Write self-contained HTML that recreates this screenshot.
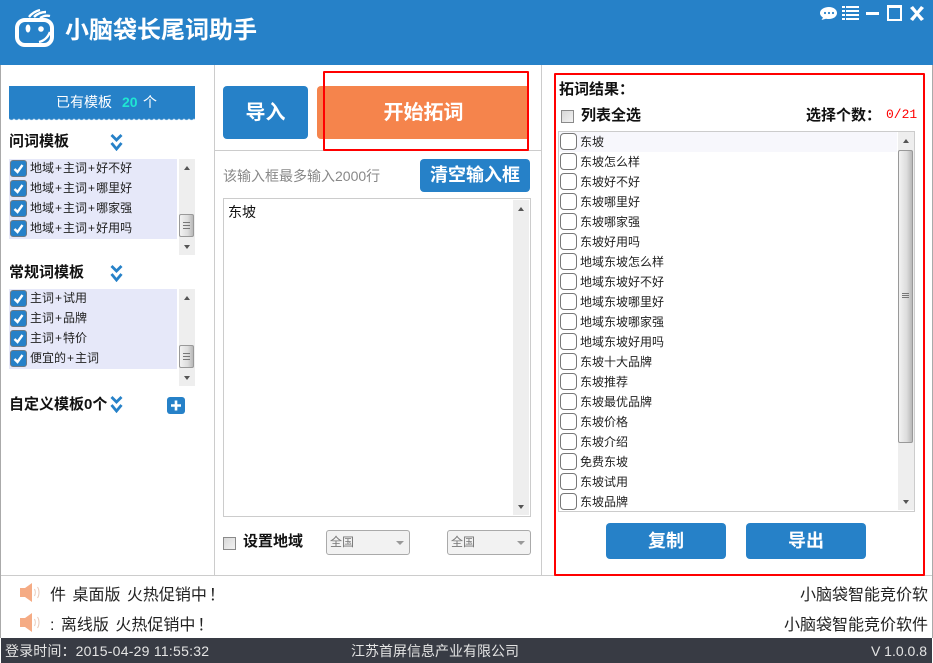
<!DOCTYPE html>
<html lang="zh"><head><meta charset="utf-8"><title>小脑袋长尾词助手</title>
<style>
html,body{margin:0;padding:0;background:#fff}
#app{position:relative;width:933px;height:663px;overflow:hidden;background:#fff;font-family:"Liberation Sans","Noto Sans CJK SC",sans-serif;color:#222;font-size:12px}
#app div,#app svg{position:absolute}
.t{white-space:nowrap;line-height:20px}
.b14{font-size:15px;font-weight:bold;color:#111}
.p{font-family:"Noto Sans CJK TC",sans-serif}
.m{margin:0 1px}
.btn{background:#2681c8;color:#fff;border-radius:4px;text-align:center;font-weight:bold;white-space:nowrap}
.ck{width:15px;height:15px;border:1px solid #6d7a85;border-radius:3px;background:#2681c8}
.ck svg{left:2px;top:2px}
.un{width:15px;height:15px;border:1px solid #777;border-radius:4px;background:#fff}
.it{left:580px;font-size:12px;color:#222;line-height:20px;white-space:nowrap}
.lt{left:30px;font-size:12px;color:#222;line-height:20px;white-space:nowrap}
.sb{background:#eee}
.up{width:0;height:0;border-left:3px solid transparent;border-right:3px solid transparent;border-bottom:4px solid #555}
.dn{width:0;height:0;border-left:3px solid transparent;border-right:3px solid transparent;border-top:4px solid #555}
.thumb{background:linear-gradient(90deg,#f2f2f2,#dcdcdc 60%,#b8b8b8);border:1px solid #999;border-radius:2px;box-sizing:border-box}
.gr{width:7px;height:1px;background:#777}
.sq{width:11px;height:11px;border:1px solid #8a8a8a;background:linear-gradient(135deg,#d8d8d8,#f2f2f2)}
.sel{width:82px;height:23px;border:1px solid #aaa;border-radius:3px;background:#f2f2f2;color:#777;line-height:23px;text-indent:3px;font-size:12px}
.sel i{position:absolute;right:5px;top:10px;width:0;height:0;border-left:4px solid transparent;border-right:4px solid transparent;border-top:4px solid #999}
.mq{font-size:16px;color:#222;word-spacing:2px}
</style></head><body>
<div id="app">
<!-- header -->
<div style="left:0;top:0;width:933px;height:65px;background:#2681c8"></div>
<svg style="left:12px;top:8px" width="46" height="42" viewBox="0 0 46 42" fill="none">
<rect x="5" y="12" width="35" height="25" rx="8" stroke="#fff" stroke-width="4"/>
<path d="M17 9C20 5 24 3 28 2M22 9C25 6 29 4 34 4M28 10C31 8 34 7 38 8" stroke="#fff" stroke-width="2.400"/>
<ellipse cx="16" cy="20.500" rx="2.400" ry="4" fill="#fff"/><circle cx="29" cy="21" r="2.800" fill="#fff"/>
<path d="M27 34C32 33 36 29 38 24" stroke="#fff" stroke-width="2.400"/>
</svg>
<div class="t" style="left:65px;top:15px;font-size:24px;font-weight:bold;color:#fff;line-height:32px">小脑袋长尾词助手</div>
<svg style="left:820px;top:5px" width="106" height="17" viewBox="0 0 106 17" fill="#fff">
<path d="M9 2C13.500 2 17 4.500 17 8S13.500 14 9 14C8 14 7 14 6 13.700L1.500 15L3 12.500C1.300 11.500 0 10 0 8C0 4.500 4 2 9 2Z"/>
<circle cx="5" cy="8" r="1.100" fill="#2681c8"/><circle cx="9" cy="8" r="1.100" fill="#2681c8"/><circle cx="13" cy="8" r="1.100" fill="#2681c8"/>
<rect x="22" y="1" width="3" height="2"/><rect x="26" y="1" width="13" height="2"/>
<rect x="22" y="5" width="3" height="2"/><rect x="26" y="5" width="13" height="2"/>
<rect x="22" y="9" width="3" height="2"/><rect x="26" y="9" width="13" height="2"/>
<rect x="22" y="13" width="3" height="2"/><rect x="26" y="13" width="13" height="2"/>
<rect x="46" y="7" width="13" height="3"/>
<path d="M67 0H82V16H67ZM69 3V14H80V3Z" fill-rule="evenodd"/>
<path d="M90 3L93 1L97 6L101 1L104 3L99 8.500L104 14L101 16L97 11L93 16L90 14L95 8.500Z"/>
</svg>
<!-- frame -->
<div style="left:0;top:65px;width:1px;height:573px;background:#aaa"></div>
<div style="left:932px;top:65px;width:1px;height:573px;background:#aaa"></div>
<div style="left:214px;top:65px;width:1px;height:510px;background:#ccc"></div>
<div style="left:541px;top:65px;width:1px;height:510px;background:#ccc"></div>
<div style="left:215px;top:150px;width:326px;height:1px;background:#ccc"></div>
<div style="left:1px;top:575px;width:931px;height:1px;background:#ccc"></div>
<!-- left panel -->
<div style="left:9px;top:86px;width:186px;height:32px;background:#2681c8"></div>
<div style="left:9px;top:117px;width:186px;height:5px;background:radial-gradient(circle at 2.500px 0,#2681c8 2.500px,#bcd8ee 3px,#fff 3.500px) 0 0/5px 5px repeat-x"></div>
<div class="t" style="left:56px;top:92px;font-size:14px;color:#fff">已有模板</div>
<div class="t" style="left:122px;top:92px;font-size:14px;font-weight:bold;color:#1fe6d2">20</div>
<div class="t" style="left:143px;top:92px;font-size:14px;color:#fff">个</div>

<div class="t b14" style="left:9px;top:132px">问词模板</div>
<svg style="left:110px;top:134px" width="13" height="17" viewBox="0 0 13 17" fill="none" stroke="#2681c8" stroke-width="2.800"><path d="M1.500 1L6.500 6L11.500 1M1.500 9L6.500 15L11.500 9"/></svg>
<div style="left:9px;top:159px;width:168px;height:80px;background:#e6e8f9"></div>
<div class="ck" style="left:10px;top:160px"><svg width="11" height="11" viewBox="0 0 11 11" fill="none" stroke="#fff" stroke-width="2.400"><path d="M1.500 6L4.500 9L9.500 2"/></svg></div>
<div class="ck" style="left:10px;top:180px"><svg width="11" height="11" viewBox="0 0 11 11" fill="none" stroke="#fff" stroke-width="2.400"><path d="M1.500 6L4.500 9L9.500 2"/></svg></div>
<div class="ck" style="left:10px;top:200px"><svg width="11" height="11" viewBox="0 0 11 11" fill="none" stroke="#fff" stroke-width="2.400"><path d="M1.500 6L4.500 9L9.500 2"/></svg></div>
<div class="ck" style="left:10px;top:220px"><svg width="11" height="11" viewBox="0 0 11 11" fill="none" stroke="#fff" stroke-width="2.400"><path d="M1.500 6L4.500 9L9.500 2"/></svg></div>
<div class="lt" style="top:158px">地域<span class="m">+</span>主词<span class="m">+</span>好不好</div>
<div class="lt" style="top:178px">地域<span class="m">+</span>主词<span class="m">+</span>哪里好</div>
<div class="lt" style="top:198px">地域<span class="m">+</span>主词<span class="m">+</span>哪家强</div>
<div class="lt" style="top:218px">地域<span class="m">+</span>主词<span class="m">+</span>好用吗</div>
<div class="sb" style="left:179px;top:159px;width:16px;height:96px"></div>
<div class="up" style="left:184px;top:166px"></div><div class="dn" style="left:184px;top:245px"></div>
<div class="thumb" style="left:179px;top:214px;width:15px;height:23px"></div>
<div class="gr" style="left:183px;top:222px"></div><div class="gr" style="left:183px;top:225px"></div><div class="gr" style="left:183px;top:228px"></div>

<div class="t b14" style="left:9px;top:132px;display:none"></div>
<div class="t b14" style="left:9px;top:263px">常规词模板</div>
<svg style="left:110px;top:265px" width="13" height="17" viewBox="0 0 13 17" fill="none" stroke="#2681c8" stroke-width="2.800"><path d="M1.500 1L6.500 6L11.500 1M1.500 9L6.500 15L11.500 9"/></svg>
<div style="left:9px;top:289px;width:168px;height:80px;background:#e6e8f9"></div>
<div class="ck" style="left:10px;top:290px"><svg width="11" height="11" viewBox="0 0 11 11" fill="none" stroke="#fff" stroke-width="2.400"><path d="M1.500 6L4.500 9L9.500 2"/></svg></div>
<div class="ck" style="left:10px;top:310px"><svg width="11" height="11" viewBox="0 0 11 11" fill="none" stroke="#fff" stroke-width="2.400"><path d="M1.500 6L4.500 9L9.500 2"/></svg></div>
<div class="ck" style="left:10px;top:330px"><svg width="11" height="11" viewBox="0 0 11 11" fill="none" stroke="#fff" stroke-width="2.400"><path d="M1.500 6L4.500 9L9.500 2"/></svg></div>
<div class="ck" style="left:10px;top:350px"><svg width="11" height="11" viewBox="0 0 11 11" fill="none" stroke="#fff" stroke-width="2.400"><path d="M1.500 6L4.500 9L9.500 2"/></svg></div>
<div class="lt" style="top:288px">主词<span class="m">+</span>试用</div>
<div class="lt" style="top:308px">主词<span class="m">+</span>品牌</div>
<div class="lt" style="top:328px">主词<span class="m">+</span>特价</div>
<div class="lt" style="top:348px">便宜的<span class="m">+</span>主词</div>
<div class="sb" style="left:179px;top:289px;width:16px;height:97px"></div>
<div class="up" style="left:184px;top:296px"></div><div class="dn" style="left:184px;top:376px"></div>
<div class="thumb" style="left:179px;top:345px;width:15px;height:23px"></div>
<div class="gr" style="left:183px;top:353px"></div><div class="gr" style="left:183px;top:356px"></div><div class="gr" style="left:183px;top:359px"></div>

<div class="t b14" style="left:9px;top:395px">自定义模板0个</div>
<svg style="left:110px;top:396px" width="13" height="17" viewBox="0 0 13 17" fill="none" stroke="#2681c8" stroke-width="2.800"><path d="M1.500 1L6.500 6L11.500 1M1.500 9L6.500 15L11.500 9"/></svg>
<svg style="left:167px;top:397px" width="18" height="17" viewBox="0 0 18 17"><rect width="18" height="17" rx="3" fill="#2681c8"/><path d="M4 8.500H14M9 3.500V13.500" stroke="#fff" stroke-width="2.600"/></svg>

<!-- middle -->
<div class="btn" style="left:223px;top:86px;width:85px;height:53px;line-height:55px;font-size:20px">导入</div>
<div class="btn" style="left:317px;top:86px;width:212px;height:53px;line-height:55px;font-size:20px;background:#f5844c;border-radius:4px 0 0 4px;text-indent:1px">开始拓词</div>
<div style="left:323px;top:71px;width:202px;height:76px;border:2px solid #f00;border-radius:1px"></div>
<div class="t" style="left:223px;top:166px;font-size:14px;color:#888">该输入框最多输入2000行</div>
<div class="btn" style="left:420px;top:159px;width:110px;height:33px;line-height:33px;font-size:18px">清空输入框</div>
<div style="left:223px;top:198px;width:306px;height:317px;border:1px solid #ccc"></div>
<div class="t" style="left:228px;top:202px;font-size:14px;color:#111">东坡</div>
<div class="sb" style="left:513px;top:200px;width:16px;height:315px"></div>
<div class="up" style="left:518px;top:207px"></div><div class="dn" style="left:518px;top:505px"></div>
<div class="sq" style="left:223px;top:537px"></div>
<div class="t b14" style="left:243px;top:532px">设置地域</div>
<div class="sel" style="left:326px;top:530px">全国<i></i></div>
<div class="sel" style="left:447px;top:530px">全国<i></i></div>

<!-- right -->
<div style="left:554px;top:73px;width:367px;height:499px;border:2px solid #f00;border-radius:1px"></div>
<div class="t b14" style="left:559px;top:79px">拓词结果<span class="p">：</span></div>
<div class="sq" style="left:561px;top:110px"></div>
<div class="t b14" style="left:581px;top:106px">列表全选</div>
<div class="t b14" style="left:806px;top:105px">选择个数<span class="p">：</span></div>
<div class="t" style="left:886px;top:105px;font-family:'Liberation Mono',monospace;font-size:13px;color:#f00">0/21</div>
<div style="left:558px;top:131px;width:355px;height:379px;border:1px solid #ccc"></div>
<div style="left:559px;top:132px;width:338px;height:20px;background:#f7f7fc"></div>
<div class="un" style="left:560px;top:133px"></div><div class="it" style="top:132px">东坡</div>
<div class="un" style="left:560px;top:153px"></div><div class="it" style="top:152px">东坡怎么样</div>
<div class="un" style="left:560px;top:173px"></div><div class="it" style="top:172px">东坡好不好</div>
<div class="un" style="left:560px;top:193px"></div><div class="it" style="top:192px">东坡哪里好</div>
<div class="un" style="left:560px;top:213px"></div><div class="it" style="top:212px">东坡哪家强</div>
<div class="un" style="left:560px;top:233px"></div><div class="it" style="top:232px">东坡好用吗</div>
<div class="un" style="left:560px;top:253px"></div><div class="it" style="top:252px">地域东坡怎么样</div>
<div class="un" style="left:560px;top:273px"></div><div class="it" style="top:272px">地域东坡好不好</div>
<div class="un" style="left:560px;top:293px"></div><div class="it" style="top:292px">地域东坡哪里好</div>
<div class="un" style="left:560px;top:313px"></div><div class="it" style="top:312px">地域东坡哪家强</div>
<div class="un" style="left:560px;top:333px"></div><div class="it" style="top:332px">地域东坡好用吗</div>
<div class="un" style="left:560px;top:353px"></div><div class="it" style="top:352px">东坡十大品牌</div>
<div class="un" style="left:560px;top:373px"></div><div class="it" style="top:372px">东坡推荐</div>
<div class="un" style="left:560px;top:393px"></div><div class="it" style="top:392px">东坡最优品牌</div>
<div class="un" style="left:560px;top:413px"></div><div class="it" style="top:412px">东坡价格</div>
<div class="un" style="left:560px;top:433px"></div><div class="it" style="top:432px">东坡介绍</div>
<div class="un" style="left:560px;top:453px"></div><div class="it" style="top:452px">免费东坡</div>
<div class="un" style="left:560px;top:473px"></div><div class="it" style="top:472px">东坡试用</div>
<div class="un" style="left:560px;top:493px"></div><div class="it" style="top:492px">东坡品牌</div>
<div class="sb" style="left:898px;top:132px;width:16px;height:378px"></div>
<div class="up" style="left:903px;top:139px"></div><div class="dn" style="left:903px;top:500px"></div>
<div class="thumb" style="left:898px;top:150px;width:15px;height:293px"></div>
<div class="gr" style="left:902px;top:293px"></div><div class="gr" style="left:902px;top:295px"></div><div class="gr" style="left:902px;top:297px"></div>
<div class="btn" style="left:606px;top:523px;width:120px;height:36px;line-height:36px;font-size:18px">复制</div>
<div class="btn" style="left:746px;top:523px;width:120px;height:36px;line-height:36px;font-size:18px">导出</div>

<!-- marquee -->
<svg style="left:19px;top:583px" width="22" height="19" viewBox="0 0 22 19"><path d="M1 5H6L13 0V19L6 14H1Z" fill="#f5ab84"/><path d="M15.500 6C16.500 8 16.500 11 15.500 13M18.500 4C20.500 7 20.500 12 18.500 15" stroke="#e8c8b8" fill="none"/></svg>
<svg style="left:19px;top:613px" width="22" height="19" viewBox="0 0 22 19"><path d="M1 5H6L13 0V19L6 14H1Z" fill="#f5ab84"/><path d="M15.500 6C16.500 8 16.500 11 15.500 13M18.500 4C20.500 7 20.500 12 18.500 15" stroke="#e8c8b8" fill="none"/></svg>
<div class="t mq" style="left:50px;top:583px">件 桌面版 火热促销中<span class="p" style="margin-left:2px">！</span></div>
<div class="t mq" style="left:50px;top:613px">: 离线版 火热促销中<span class="p" style="margin-left:2px">！</span></div>
<div class="t" style="right:5px;top:586px;font-size:16px;color:#222">小脑袋智能竞价软</div>
<div class="t" style="right:5px;top:616px;font-size:16px;color:#222">小脑袋智能竞价软件</div>

<!-- footer -->
<div style="left:1px;top:638px;width:931px;height:25px;background:#383b44"></div>
<div class="t" style="left:5px;top:641px;font-size:14px;color:#e4e4e4;letter-spacing:.12px">登录时间<span class="p">：</span><span style="letter-spacing:.25px">2015-04-29 11:55:32</span></div>
<div class="t" style="left:351px;top:641px;font-size:14px;color:#e4e4e4">江苏首屏信息产业有限公司</div>
<div class="t" style="right:6px;top:641px;font-size:14px;color:#e4e4e4">V 1.0.0.8</div>
</div>
</body></html>
